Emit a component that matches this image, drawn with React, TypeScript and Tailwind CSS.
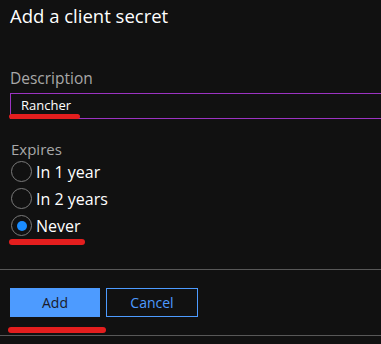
import { useState } from 'react';

const OPTIONS = ['In 1 year', 'In 2 years', 'Never'];

function Radio({ label, checked, onClick }: { label: string; checked: boolean; onClick: () => void }) {
  return (
    <button type="button" onClick={onClick} className="flex items-center h-[27px] gap-[4px] text-left">
      <span className="w-[21px] h-[21px] rounded-full border border-[#7a7a7a] flex items-center justify-center">
        {checked && <span className="w-[10px] h-[10px] rounded-full bg-[#1a8cff]" />}
      </span>
      <span className={`text-[16px] text-white leading-none ${checked ? 'font-medium' : ''}`}>{label}</span>
    </button>
  );
}

export default function App() {
  const [expires, setExpires] = useState('Never');

  return (
    <div
      className="relative w-[381px] h-[344px] overflow-hidden bg-[#111111]"
      style={{ fontFamily: '"Open Sans", "Noto Sans", sans-serif' }}
    >
      {/* Titre */}
      <h1 className="pl-[10px] pt-[3px] text-[18.5px] leading-[26px] text-white">Add a client secret</h1>

      {/* Description */}
      <div className="mt-[39px] pl-[10px]">
        <label className="block text-[15.5px] leading-[20px] text-[#a8a8a8]">Description</label>
        <div className="mt-[5px] w-[400px] h-[26px] border border-[#9b33c2] flex items-center pl-[10px]">
          <span className="text-[13px] text-white">Rancher</span>
        </div>
      </div>

      {/* Expires */}
      <div className="mt-[20px] pl-[11px]">
        <label className="block text-[15px] leading-[20px] text-[#a8a8a8]">Expires</label>
        <div className="flex flex-col mt-[-1px]">
          {OPTIONS.map((o) => (
            <Radio key={o} label={o} checked={expires === o} onClick={() => setExpires(o)} />
          ))}
        </div>
      </div>

      {/* Pied */}
      <div className="mt-[30px] border-t border-[#585858] pt-[18px] pb-[18px] border-b px-[10px] flex gap-[6px]">
        <button className="w-[90px] h-[29px] bg-[#4d9bff] text-[14px] text-[#1a1a2a]">Add</button>
        <button className="w-[92px] h-[29px] border border-[#4d9bff] text-[14px] text-[#4d9bff]">Cancel</button>
      </div>

      {/* Annotations rouges */}
      <div className="absolute left-[9px] top-[114px] w-[71px] h-[5px] rounded-full bg-[#e41e1e]" />
      <div className="absolute left-[9px] top-[239px] w-[76px] h-[6px] rounded-full bg-[#e41e1e]" />
      <div className="absolute left-[8px] top-[327px] w-[98px] h-[6px] rounded-full bg-[#e41e1e]" />
    </div>
  );
}
